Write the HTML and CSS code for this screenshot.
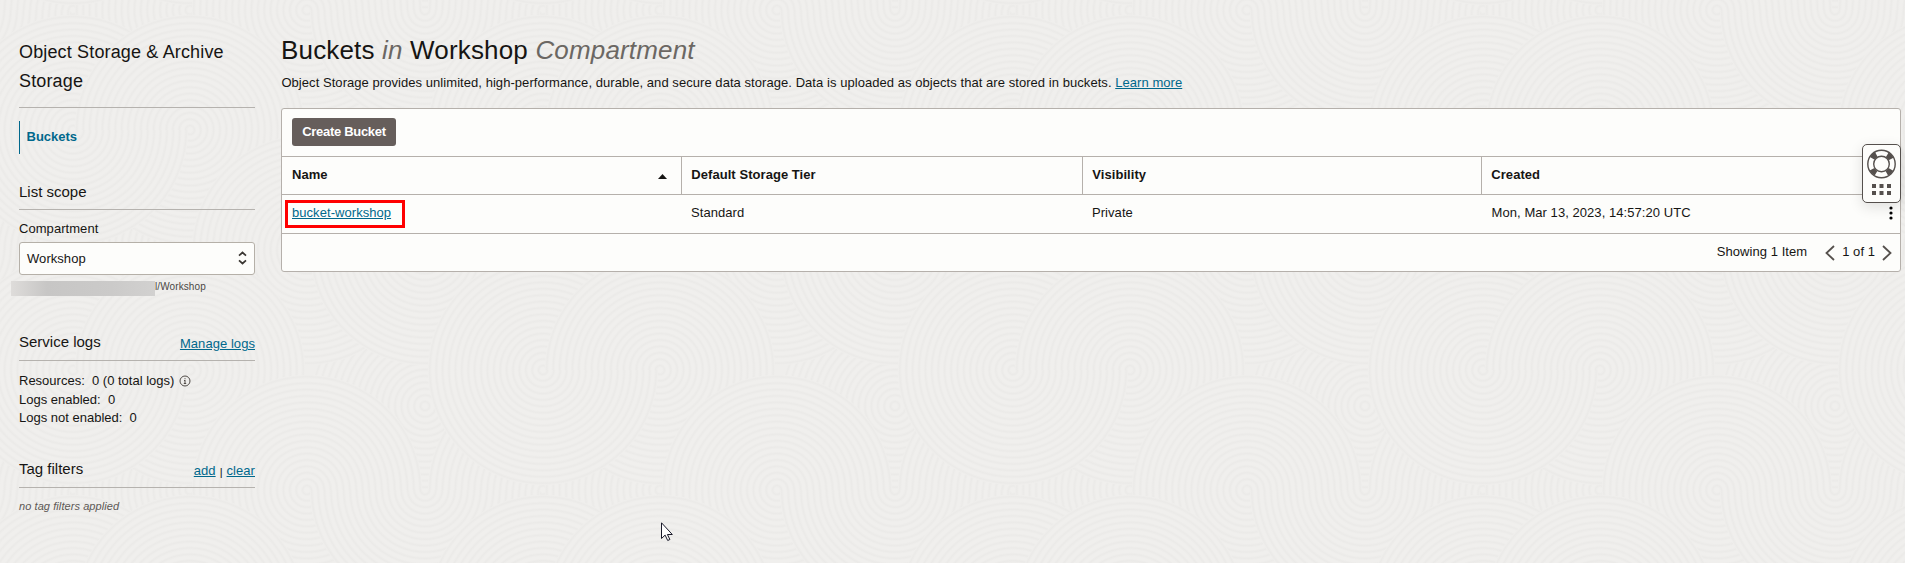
FILE: index.html
```html
<!DOCTYPE html>
<html lang="en">
<head>
<meta charset="utf-8">
<title>Buckets</title>
<link rel="stylesheet" href="styles.css">
</head>
<body>
<svg class="backdrop" width="1905" height="563" aria-hidden="true">
  <defs>
    <radialGradient id="rings" gradientUnits="userSpaceOnUse" cx="0" cy="0" r="6.4" spreadMethod="repeat">
      <stop offset="0" stop-color="#f0efed"/><stop offset="0.35" stop-color="#f0efed"/>
      <stop offset="0.7" stop-color="#ebeae8"/><stop offset="1" stop-color="#f0efed"/>
    </radialGradient>
    <circle id="disc" r="115.200" fill="url(#rings)"/>
    <path id="upper" d="M-115.200 0a115.200 115.200 0 0 1 230.400 0z" fill="url(#rings)"/>
    <path id="lower" d="M-115.200 0a115.200 115.200 0 0 0 230.400 0z" fill="url(#rings)"/>
    <g id="base">
      <use href="#disc" x="0" y="156"/><use href="#disc" x="118" y="240"/><use href="#disc" x="235" y="240"/><use href="#disc" x="235" y="120"/><use href="#disc" x="470" y="240"/>
    </g>
    <g id="motif">
      <use href="#disc" x="352" y="240"/><use href="#lower" x="470" y="240"/>
      <use href="#disc" x="118" y="120"/><use href="#upper" x="235" y="120"/>
    </g>
    <pattern id="swirls" width="470" height="240" patternUnits="userSpaceOnUse" x="425" y="250">
      <rect width="470" height="240" fill="#efeeec"/>
      <use href="#base" x="-470" y="-240"/><use href="#base" y="-240"/><use href="#base" x="-470"/><use href="#base"/><use href="#base" x="470"/>
      <use href="#motif" x="-470" y="-240"/><use href="#motif" y="-240"/><use href="#motif" x="-470"/><use href="#motif"/><use href="#motif" x="470"/>
    </pattern>
  </defs>
  <rect width="1905" height="563" fill="url(#swirls)"/>
</svg>
<div class="page">
  <aside class="sidebar">
    <h2 class="service">Object Storage &amp; Archive Storage</h2>
    <nav class="nav"><a class="nav-item">Buckets</a></nav>
    <section class="scope">
      <div class="head"><h3>List scope</h3></div>
      <label class="label">Compartment</label>
      <div class="select"><span>Workshop</span>
        <svg width="9" height="14" viewBox="0 0 9 14"><path d="M1 4.600 4.500 1.500 8 4.600M1 9.400 4.500 12.500 8 9.400" fill="none" stroke="#3a3632" stroke-width="1.700"/></svg>
      </div>
      <div class="path"><span class="mask"></span><span>l/Workshop</span></div>
    </section>
    <section class="logs">
      <div class="head"><h3>Service logs</h3><a class="link">Manage logs</a></div>
      <p>Resources:&nbsp; 0 (0 total logs)
        <svg class="info" width="12" height="12" viewBox="0 0 12 12"><circle cx="6" cy="6" r="5" fill="none" stroke="#504b47"/><path d="M6 3.200v1M6 5v3.600M5 5.500h1M4.800 8.500h2.400" stroke="#504b47" fill="none"/></svg></p>
      <p>Logs enabled:&nbsp; 0</p>
      <p>Logs not enabled:&nbsp; 0</p>
    </section>
    <section class="tags">
      <div class="head"><h3>Tag filters</h3><span class="actions"><a class="link">add</a><i class="bar">|</i><a class="link">clear</a></span></div>
      <p class="none">no tag filters applied</p>
    </section>
  </aside>
  <main class="main">
    <h1 class="title">Buckets <em>in</em> Workshop <em>Compartment</em></h1>
    <p class="intro">Object Storage provides unlimited, high-performance, durable, and secure data storage. Data is uploaded as objects that are stored in buckets. <a class="link">Learn more</a></p>
    <div class="panel">
      <div class="toolbar"><button class="create">Create Bucket</button></div>
      <div class="row header">
        <div class="cell">Name<svg class="sort" width="9" height="5" viewBox="0 0 9 5"><path d="M0 5 4.500 0 9 5z" fill="#161513"/></svg></div>
        <div class="cell">Default Storage Tier</div><div class="cell">Visibility</div><div class="cell">Created</div>
      </div>
      <div class="row">
        <div class="cell"><a class="link marked">bucket-workshop</a></div>
        <div class="cell">Standard</div><div class="cell">Private</div>
        <div class="cell">Mon, Mar 13, 2023, 14:57:20 UTC<svg class="dots" width="4" height="14" viewBox="0 0 4 14"><circle cx="2" cy="2" r="1.600"/><circle cx="2" cy="7" r="1.600"/><circle cx="2" cy="12" r="1.600"/></svg></div>
      </div>
      <div class="footer"><span class="count">Showing 1 Item</span>
        <svg width="10" height="16" viewBox="0 0 10 16"><path d="M9 1 1.500 8 9 15" fill="none" stroke="#55504c" stroke-width="1.800"/></svg>
        <span class="pages">1 of 1</span>
        <svg width="10" height="16" viewBox="0 0 10 16"><path d="M1 1 8.500 8 1 15" fill="none" stroke="#55504c" stroke-width="1.800"/></svg>
      </div>
    </div>
  </main>
</div>
<div class="help">
  <svg width="39" height="59" viewBox="0 0 39 59"><g fill="none" stroke="#55504d"><circle cx="19.500" cy="20" r="10.800" stroke-width="5.500" stroke-dasharray="5.600 11.365" stroke-dashoffset="-5.680"/><circle cx="19.500" cy="20" r="13.700" stroke-width="1.400"/><circle cx="19.500" cy="20" r="7.800" stroke-width="1.400"/></g><path d="M10 40h4v4h-4zM17.500 40h4v4h-4zM25 40h4v4h-4zM10 47h4v4h-4zM17.500 47h4v4h-4zM25 47h4v4h-4z" fill="#55504d"/></svg>
</div>
<svg class="cursor" width="13" height="20" viewBox="0 0 13 20"><path d="M.5.8v15.700l3.600-3.400 2.600 5.400 2.200-1-2.500-5h4.900z" fill="#fff" stroke="#1a1a2a"/></svg>
</body>
</html>
```
FILE: styles.css
```css
*, *::after { box-sizing: border-box; margin: 0; padding: 0; }
body { width: 1905px; height: 563px; overflow: hidden; background: #f0efed; color: #161513; font: 13px/19px "Liberation Sans", Arial, sans-serif; letter-spacing: .055px; }
.backdrop { position: absolute; left: 0; top: 0; z-index: -1; }
.page { display: flex; padding: 0 4px 0 19px; gap: 26px; }
.sidebar { width: 236px; flex: none; padding-top: 38px; }
.service { font-size: 18px; line-height: 29px; font-weight: 400; letter-spacing: .15px; height: 70px; border-bottom: 1px solid #b5b2ae; }
.nav { padding-top: 13px; }
.nav-item { display: block; height: 33px; line-height: 31px; padding-left: 6.5px; border-left: 1px solid #00688c; color: #00688c; font-weight: 700; letter-spacing: 0; }
.link { color: #00688c; text-decoration: underline; }
.head { display: flex; justify-content: space-between; height: 36px; border-bottom: 1px solid #b5b2ae; }
.head h3 { font-size: 15px; line-height: 34px; font-weight: 400; letter-spacing: 0; }
.scope .head h3 { line-height: 36px; }
.head .link { line-height: 38px; }
.scope { margin-top: 20px; }
.label { display: block; margin-top: 9px; height: 23px; line-height: 20px; }
.select { height: 33px; display: flex; align-items: center; justify-content: space-between; padding: 0 7px; background: #fdfdfb; border: 1px solid #b5b0a8; border-radius: 3px; }
.select svg { margin-bottom: 1px; }
.path { display: flex; margin: 6px 0 0 -8px; font-size: 10px; line-height: 11px; color: #4b4744; letter-spacing: .1px; }
.mask { width: 144px; height: 15px; background: linear-gradient(90deg, #dedcda, #c7c6c5 25%, #cbcac9 70%, #d2d1d0); }
.logs { margin-top: 29px; }
.logs p { height: 18px; letter-spacing: 0; }
.logs .head + p { margin-top: 10px; height: 19px; }
.info { vertical-align: -2px; margin-left: 1px; }
.tags { margin-top: 26px; }
.actions { display: flex; }
.bar { font-style: normal; font-size: 11px; line-height: 41px; margin: 0 4px; }
.none { margin-top: 9px; font-size: 11px; font-style: italic; color: #5c5855; letter-spacing: .08px; }
.main { flex: 1; padding-top: 33px; }
.title { font-size: 26px; line-height: 34px; font-weight: 400; letter-spacing: .17px; }
.title em { color: #6b6763; }
.intro { margin-top: 6px; height: 35px; padding-left: .4px; }
.panel { height: 164px; background: #fdfdfb; border: 1px solid #b5b0ab; border-radius: 3px; }
.toolbar { height: 47px; padding: 9px 10px; }
.create { display: block; width: 104px; height: 28px; padding-bottom: 1px; background: #665e5b; color: #fff; border: 0; border-radius: 3px; font: 700 13px/20px "Liberation Sans", Arial, sans-serif; letter-spacing: -.3px; }
.row { display: grid; grid-template-columns: 399px 401px 399px 1fr; height: 39px; border-top: 1px solid #b5b0ab; }
.row.header { height: 38px; font-weight: 700; }
.cell { display: flex; justify-content: space-between; align-items: center; padding: 0 7px 3px 10px; }
.cell:last-child { padding-left: 10.6px; }
.header .cell { padding-right: 14px; }
.header .cell + .cell { border-left: 1px solid #b5b0ab; padding-left: 9.3px; }
.sort { margin-top: 5px; }
.dots { margin-top: 1px; }
.marked { position: relative; }
.marked::after { content: ""; position: absolute; left: -7px; top: -3px; width: 120px; height: 28px; border: 3px solid #f00; }
.footer { display: flex; justify-content: flex-end; align-items: center; height: 38px; border-top: 1px solid #b5b0ab; padding-right: 8px; }
.count { margin-right: 18px; padding-bottom: 2px; }
.pages { margin: 0 7px; padding-bottom: 2px; }
.help { position: absolute; left: 1862px; top: 144px; width: 39px; height: 59px; background: #fdfdfb; border: 1px solid #55504d; border-radius: 5px; box-shadow: 0 4px 14px rgba(0,0,0,.12); }
.help svg { display: block; margin: -1px; }
.cursor { position: absolute; left: 661px; top: 522px; }
```
